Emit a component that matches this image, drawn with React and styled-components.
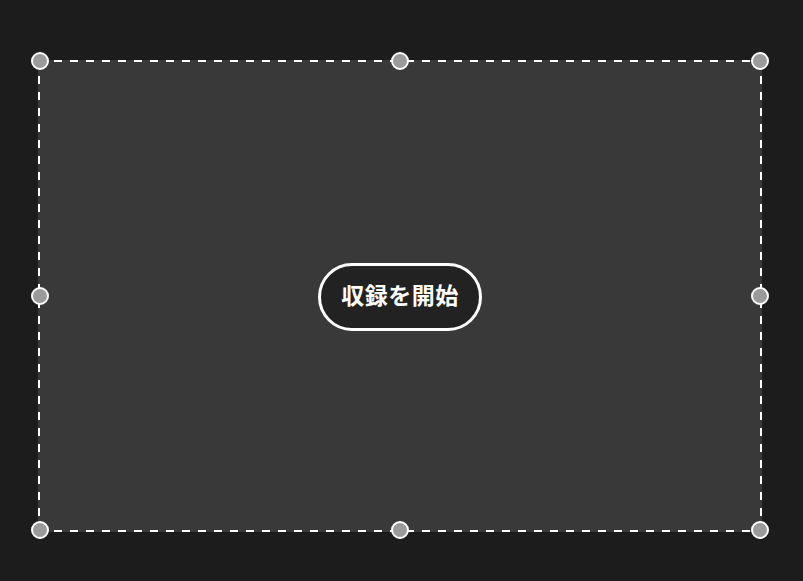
import React from 'react'
import styled, { createGlobalStyle } from 'styled-components'

const Global = createGlobalStyle`
	html, body {
		margin: 0;
		padding: 0;
		background: #1c1c1c;
	}
	body {
		font-family: "Noto Sans CJK JP", "Noto Sans", sans-serif;
	}
`

const Page = styled.div`
	width: 803px;
	height: 581px;
	box-sizing: border-box;
	padding: 60px 0 0 38px;
	background: #1c1c1c;
`

// dashed outline drawn with gradients so the dash length is 8px on, 8px off
const dashH = 'repeating-linear-gradient(90deg, #ffffff 0 8px, transparent 8px 16px)'
const dashV = 'repeating-linear-gradient(180deg, #ffffff 0 8px, transparent 8px 16px)'

const Frame = styled.div`
	position: relative;
	width: 724px;
	height: 472px;
	box-sizing: border-box;
	background-color: #393939;
	background-image: ${ dashH }, ${ dashH }, ${ dashV }, ${ dashV };
	background-size: 100% 2px, 100% 2px, 2px 100%, 2px 100%;
	background-position: 0 0, 0 100%, 0 0, 100% 0;
	background-repeat: no-repeat;
	display: flex;
	align-items: center;
	justify-content: center;
`

// handles sit on the middle of the dashed line
const HandleLayer = styled.div`
	position: absolute;
	inset: 1px 2px 2px 2px;
	pointer-events: none;
`

const Handle = styled.span`
	position: absolute;
	left: ${ p => p.x };
	top: ${ p => p.y };
	width: 14px;
	height: 14px;
	border: 2px solid #ffffff;
	border-radius: 50%;
	background: #9a9a9a;
	transform: translate(-50%, -50%);
`

const RecordButton = styled.button`
	width: 164px;
	height: 68px;
	box-sizing: border-box;
	padding: 0 0 7px;
	border: 3px solid #ffffff;
	border-radius: 34px;
	background: #222222;
	color: #ffffff;
	font-family: "Noto Sans CJK JP", "Noto Sans", sans-serif;
	font-size: 23px;
	font-weight: 700;
	letter-spacing: 0.5px;
	cursor: pointer;
	margin-top: 2px;
`

const handles = [
	['0%', '0%'], ['50%', '0%'], ['100%', '0%'],
	['0%', '50%'], ['100%', '50%'],
	['0%', '100%'], ['50%', '100%'], ['100%', '100%'],
]

const App = () => {
	return (
		<Page>
			<Global />
			<Frame>
				<RecordButton>収録を開始</RecordButton>
				<HandleLayer>
					{ handles.map(([x, y]) => <Handle key={ x + y } x={ x } y={ y } />) }
				</HandleLayer>
			</Frame>
		</Page>
	)
}

export default App
